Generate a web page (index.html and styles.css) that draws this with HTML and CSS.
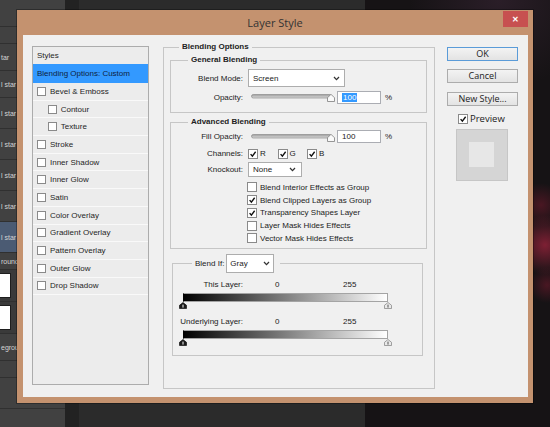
FILE: index.html
```html
<!DOCTYPE html>
<html lang="en">
<head>
    <meta charset="UTF-8">
    <meta name="viewport" content="width=device-width, initial-scale=1.0">
    <title>Layer Style</title>
    <link rel="stylesheet" href="styles.css">
</head>
<body>
    <!-- photoshop workspace behind the dialog -->
    <div class="desktop">
        <div class="ps-panel">
            <div class="ps-row mid"></div>
            <div class="ps-row slim"></div>
            <div class="ps-row mid">tar</div>
            <div class="ps-row mid">l star</div>
            <div class="ps-row">l star</div>
            <div class="ps-row">l star</div>
            <div class="ps-row">l star</div>
            <div class="ps-row">l star</div>
            <div class="ps-row active">l star</div>
            <div class="ps-row slim">rounc</div>
            <div class="ps-row thumb"><div class="ps-thumb"></div></div>
            <div class="ps-row thumb"><div class="ps-thumb"></div></div>
            <div class="ps-row mid">egrou</div>
            <div class="ps-row slim"></div>
            <div class="ps-row"></div>
        </div>
        <div class="ps-scroll"></div>
        <div class="ps-canvas"></div>
    </div>

    <div class="dialog">
        <div class="titlebar">
            <span class="title">Layer Style</span>
            <span class="close">&#x2715;</span>
        </div>

        <div class="dialog-body">
            <ul class="styles-list">
                <li class="list-head">Styles</li>
                <li class="selected">Blending Options: Custom</li>
                <li><span class="cb"></span>Bevel &amp; Emboss</li>
                <li class="sub"><span class="cb"></span>Contour</li>
                <li class="sub"><span class="cb"></span>Texture</li>
                <li><span class="cb"></span>Stroke</li>
                <li><span class="cb"></span>Inner Shadow</li>
                <li><span class="cb"></span>Inner Glow</li>
                <li><span class="cb"></span>Satin</li>
                <li><span class="cb"></span>Color Overlay</li>
                <li><span class="cb"></span>Gradient Overlay</li>
                <li><span class="cb"></span>Pattern Overlay</li>
                <li><span class="cb"></span>Outer Glow</li>
                <li><span class="cb"></span>Drop Shadow</li>
            </ul>

            <fieldset class="group main">
                <legend>Blending Options</legend>

                <fieldset class="group general">
                    <legend>General Blending</legend>
                    <div class="row mode-row">
                        <span class="lbl">Blend Mode:</span>
                        <div class="select mode">Screen
                            <svg class="chev" viewBox="0 0 7 5"><polyline points="1,1 3.5,3.6 6,1"/></svg>
                        </div>
                    </div>
                    <div class="row slider-row">
                        <span class="lbl">Opacity:</span>
                        <svg class="slider" width="84" height="9" viewBox="0 0 84 9">
                            <defs>
                                <linearGradient id="trk1" x1="0" y1="0" x2="0" y2="1">
                                    <stop offset="0" stop-color="#9a9a9a"/>
                                    <stop offset="1" stop-color="#dedede"/>
                                </linearGradient>
                            </defs>
                            <rect x="0.5" y="1.5" width="80" height="3.5" rx="1.75" fill="url(#trk1)" stroke="#8c8c8c" stroke-width="0.7"/>
                            <path d="M76.5 8.5V4.8L80 1.3l3.5 3.5v3.7z" fill="#fafafa" stroke="#7e7e7e" stroke-width="0.8"/>
                        </svg>
                        <div class="num"><span class="sel">100</span></div>
                        <span class="pct">%</span>
                    </div>
                </fieldset>

                <fieldset class="group advanced">
                    <legend>Advanced Blending</legend>
                    <div class="row fill-row">
                        <span class="lbl">Fill Opacity:</span>
                        <svg class="slider" width="84" height="9" viewBox="0 0 84 9">
                            <defs>
                                <linearGradient id="trk2" x1="0" y1="0" x2="0" y2="1">
                                    <stop offset="0" stop-color="#9a9a9a"/>
                                    <stop offset="1" stop-color="#dedede"/>
                                </linearGradient>
                            </defs>
                            <rect x="0.5" y="1.5" width="80" height="3.5" rx="1.75" fill="url(#trk2)" stroke="#8c8c8c" stroke-width="0.7"/>
                            <path d="M76.5 8.5V4.8L80 1.3l3.5 3.5v3.7z" fill="#fafafa" stroke="#7e7e7e" stroke-width="0.8"/>
                        </svg>
                        <div class="num">100</div>
                        <span class="pct">%</span>
                    </div>
                    <div class="row chan-row">
                        <span class="lbl">Channels:</span>
                        <span class="chan"><span class="cb lg"><svg class="tick" viewBox="0 0 10 10"><path d="M2 5.2 4.2 7.6 8.3 2.2"/></svg></span>R</span>
                        <span class="chan"><span class="cb lg"><svg class="tick" viewBox="0 0 10 10"><path d="M2 5.2 4.2 7.6 8.3 2.2"/></svg></span>G</span>
                        <span class="chan"><span class="cb lg"><svg class="tick" viewBox="0 0 10 10"><path d="M2 5.2 4.2 7.6 8.3 2.2"/></svg></span>B</span>
                    </div>
                    <div class="row knock-row">
                        <span class="lbl">Knockout:</span>
                        <div class="select knock">None
                            <svg class="chev" viewBox="0 0 7 5"><polyline points="1,1 3.5,3.6 6,1"/></svg>
                        </div>
                    </div>
                    <ul class="checks">
                        <li><span class="cb lg"></span>Blend Interior Effects as Group</li>
                        <li><span class="cb lg"><svg class="tick" viewBox="0 0 10 10"><path d="M2 5.2 4.2 7.6 8.3 2.2"/></svg></span>Blend Clipped Layers as Group</li>
                        <li><span class="cb lg"><svg class="tick" viewBox="0 0 10 10"><path d="M2 5.2 4.2 7.6 8.3 2.2"/></svg></span>Transparency Shapes Layer</li>
                        <li><span class="cb lg"></span>Layer Mask Hides Effects</li>
                        <li><span class="cb lg"></span>Vector Mask Hides Effects</li>
                    </ul>
                </fieldset>

                <fieldset class="group blendif">
                    <legend>
                        <span class="blendif-lbl">Blend If:</span>
                        <div class="select gray">Gray
                            <svg class="chev" viewBox="0 0 7 5"><polyline points="1,1 3.5,3.6 6,1"/></svg>
                        </div>
                    </legend>

                    <div class="row range-head">
                        <span class="lbl">This Layer:</span>
                        <span class="lo">0</span>
                        <span>255</span>
                    </div>
                    <div class="range">
                        <div class="ramp"></div>
                        <div class="stops">
                            <svg width="8" height="7" viewBox="0 0 8 7"><path d="M.5 6.5V3.3L4 .5l3.5 2.8v3.2z" fill="#1b1b1b" stroke="#000" stroke-width=".6"/><path d="M4 2.6v3" stroke="#fff" stroke-width="1"/></svg>
                            <svg width="8" height="7" viewBox="0 0 8 7"><path d="M.5 6.5V3.3L4 .5l3.5 2.8v3.2z" fill="#e9e9e9" stroke="#7c7c7c" stroke-width=".7"/><path d="M4 2.6v3" stroke="#555" stroke-width="1"/></svg>
                        </div>
                    </div>

                    <div class="row range-head second">
                        <span class="lbl">Underlying Layer:</span>
                        <span class="lo">0</span>
                        <span>255</span>
                    </div>
                    <div class="range">
                        <div class="ramp"></div>
                        <div class="stops">
                            <svg width="8" height="7" viewBox="0 0 8 7"><path d="M.5 6.5V3.3L4 .5l3.5 2.8v3.2z" fill="#1b1b1b" stroke="#000" stroke-width=".6"/><path d="M4 2.6v3" stroke="#fff" stroke-width="1"/></svg>
                            <svg width="8" height="7" viewBox="0 0 8 7"><path d="M.5 6.5V3.3L4 .5l3.5 2.8v3.2z" fill="#e9e9e9" stroke="#7c7c7c" stroke-width=".7"/><path d="M4 2.6v3" stroke="#555" stroke-width="1"/></svg>
                        </div>
                    </div>
                </fieldset>
            </fieldset>

            <div class="actions">
                <button type="button" class="btn default">OK</button>
                <button type="button" class="btn">Cancel</button>
                <button type="button" class="btn">New Style...</button>
                <label class="preview-check">
                    <span class="cb lg"><svg class="tick" viewBox="0 0 10 10"><path d="M2 5.2 4.2 7.6 8.3 2.2"/></svg></span>Preview
                </label>
                <div class="swatch"><div class="swatch-inner"></div></div>
            </div>
        </div>
    </div>
</body>
</html>
```

FILE: styles.css
```css
* {
    box-sizing: border-box;
}

body {
    margin: 0;
    width: 550px;
    height: 427px;
    overflow: hidden;
    position: relative;
    background-color: #2a2a2a;
    font-family: 'Liberation Sans', Arial, sans-serif;
    font-size: 8px;
    color: #222;
}

/* workspace behind */

.desktop {
    display: flex;
    height: 100%;
}

.ps-panel {
    width: 65px;
    background-color: #414141;
    display: flex;
    flex-direction: column;
}

.ps-row {
    flex: none;
    height: 31px;
    display: flex;
    align-items: center;
    padding-left: 1px;
    white-space: nowrap;
    border-bottom: 1px solid #303030;
    color: #d4d4d4;
    font-size: 7px;
}

.ps-row.mid {
    height: 27px;
}

.ps-row.slim {
    height: 17px;
}

.ps-row.active {
    background-color: #4b5b73;
}

.ps-row.thumb {
    height: 32px;
    padding-left: 0;
    background-color: #3a3a3a;
}

.ps-thumb {
    width: 11px;
    height: 25px;
    background-color: #fff;
    border: 1px solid #1e1e1e;
    border-left: none;
}

.ps-scroll {
    width: 14px;
    background-color: #222;
}

.ps-canvas {
    flex: 1;
    background:
        radial-gradient(circle at 466px 245px, rgba(195, 40, 72, 0.6), rgba(195, 40, 72, 0) 30px),
        radial-gradient(circle at 462px 205px, rgba(170, 30, 60, 0.35), rgba(170, 30, 60, 0) 22px),
        radial-gradient(circle at 468px 285px, rgba(170, 30, 60, 0.35), rgba(170, 30, 60, 0) 18px),
        radial-gradient(ellipse at 420px 0, rgba(80, 50, 75, 0.35), rgba(80, 50, 75, 0) 90px),
        linear-gradient(to right, #2b2b2b 286px, #161315 286px);
}

/* dialog window */

.dialog {
    position: absolute;
    left: 17px;
    top: 10px;
    width: 516px;
    height: 393px;
    background-color: #c4926f;
    box-shadow: 0 0 0 1px rgba(0, 0, 0, 0.3);
}

.titlebar {
    display: grid;
    grid-template-columns: 1fr auto 1fr;
    align-items: center;
    height: 25px;
}

.title {
    grid-column: 2;
    font-family: 'Open Sans', 'Liberation Sans', sans-serif;
    font-size: 11px;
    color: #333;
}

.close {
    grid-column: 3;
    justify-self: end;
    align-self: start;
    margin: 1px 5px 0 0;
    width: 25px;
    height: 16px;
    display: flex;
    justify-content: center;
    align-items: center;
    background-color: #c75050;
    color: #fff;
    font-size: 8px;
    font-weight: bold;
}

.dialog-body {
    display: flex;
    align-items: flex-start;
    height: 362px;
    margin: 0 5px 0 6px;
    padding: 7px 0 0 9px;
    background-color: #f0f0f0;
}

/* styles list */

.styles-list {
    list-style: none;
    margin: 4px 0 0;
    padding: 0;
    width: 117px;
    height: 339px;
    border: 1px solid #acacac;
    background-color: #ececec;
}

.styles-list li {
    display: flex;
    align-items: center;
    height: 17.7px;
    padding-left: 4px;
    border-bottom: 1px solid #f9f9f9;
    color: #1f1f1f;
    white-space: nowrap;
}

.styles-list .list-head {
    height: 17px;
    border-bottom: none;
}

.styles-list .selected {
    height: 19px;
    background-color: #3399ff;
    color: #0e1f40;
    border-bottom: none;
}

.styles-list li.sub {
    padding-left: 14.7px;
}

.cb {
    flex: none;
    width: 9px;
    height: 9px;
    margin-right: 4px;
    border: 1px solid #8a8a8a;
    background-color: #fff;
}

.cb.lg {
    width: 10px;
    height: 10px;
    margin-right: 2px;
}

.tick {
    display: block;
    width: 100%;
    height: 100%;
    fill: none;
    stroke: #111;
    stroke-width: 1.7;
}

/* blending options */

.group {
    margin: 0;
    padding: 0;
    min-width: 0;
    border: 1px solid #c6c6c6;
}

.group legend {
    padding: 0 3px;
    font-weight: bold;
    line-height: 10px;
    color: #222;
}

.main {
    width: 272px;
    height: 347px;
    margin-left: 14px;
    padding: 0 7px 0 6px;
}

.main > legend {
    margin-left: 9px;
}

.general {
    margin-top: 3px;
    padding-bottom: 8px;
}

.general > legend,
.advanced > legend {
    margin-left: 17px;
}

.advanced {
    margin-top: 4px;
    padding-bottom: 3px;
}

.row {
    display: flex;
    align-items: center;
}

.lbl {
    flex: none;
    width: 72px;
    margin-right: 5px;
    text-align: right;
}

.mode-row {
    height: 18px;
    margin-top: 4px;
}

.slider-row {
    height: 14px;
    margin-top: 3px;
}

.select {
    display: flex;
    align-items: center;
    justify-content: space-between;
    padding: 0 4px;
    background-color: #fff;
    border: 1px solid #adadad;
    font-weight: normal;
}

.mode {
    width: 97px;
    height: 18px;
}

.knock {
    width: 54px;
    height: 15px;
    padding-right: 5px;
}

.gray {
    width: 48px;
    height: 19px;
    padding: 0 3px;
}

.chev {
    width: 7px;
    height: 5px;
    fill: none;
    stroke: #333;
    stroke-width: 1.3;
}

.slider {
    flex: none;
    margin: 1px 2px 0 3px;
}

.num {
    display: flex;
    align-items: center;
    width: 44px;
    height: 13px;
    padding-left: 4px;
    background-color: #fff;
    border: 1px solid #abadb3;
}

.sel {
    padding: 0 1px;
    background-color: #3399ff;
    color: #fff;
}

.pct {
    margin-left: 4px;
}

.fill-row {
    height: 19px;
}

.chan-row {
    height: 15px;
}

.chan {
    display: inline-flex;
    align-items: center;
    width: 29.5px;
}

.knock-row {
    height: 17px;
}

.checks {
    list-style: none;
    margin: 3px 0 0;
    padding: 0 0 0 76px;
}

.checks li {
    display: flex;
    align-items: center;
    height: 12.75px;
}

.checks .cb {
    margin-right: 3px;
}

/* blend if */

.blendif {
    margin: 5px 4px 0 2px;
    padding-bottom: 9px;
}

.blendif > legend {
    display: flex;
    align-items: center;
    margin-left: 19px;
    padding: 0 6px 0 3px;
    line-height: normal;
    font-weight: normal;
}

.blendif-lbl {
    margin-right: 2px;
}

.range-head {
    height: 14px;
    margin-top: 5px;
}

.range-head.second {
    margin-top: 6px;
}

.range-head .lbl {
    width: 70px;
    margin-right: 0;
}

.lo {
    width: 68px;
    margin-left: 32px;
}

.range {
    width: 205px;
    margin: 1px 0 0 10px;
}

.ramp {
    height: 9px;
    background: linear-gradient(to right, #000, #fff);
    border: 1px solid #a4a4a4;
    border-left-color: #000;
}

.stops {
    display: flex;
    justify-content: space-between;
    height: 7px;
    margin: 0 -4px;
}

.stops svg {
    display: block;
}

/* buttons column */

.actions {
    display: flex;
    flex-direction: column;
    width: 71px;
    margin: 4.5px 0 0 12px;
}

.btn {
    height: 14px;
    margin: 0 0 8.5px;
    padding: 0;
    font-family: 'Open Sans', 'Liberation Sans', sans-serif;
    font-size: 9px;
    line-height: 12px;
    color: #222;
    background: linear-gradient(#f3f3f3, #e3e3e3);
    border: 1px solid #acacac;
    border-radius: 0;
}

.btn.default {
    border-color: #5a9bd8;
}

.preview-check {
    display: flex;
    align-items: center;
    height: 14px;
    margin-top: -2.5px;
    padding-left: 11px;
    font-family: 'Open Sans', 'Liberation Sans', sans-serif;
    font-size: 9.5px;
    color: #222;
}

.swatch {
    width: 52px;
    height: 52px;
    margin: 3.5px 0 0 9px;
    padding: 12px;
    background-color: #d5d5d5;
    border: 1px solid #c6c6c6;
}

.swatch-inner {
    width: 25px;
    height: 25px;
    background-color: #e7e7e7;
}
```
